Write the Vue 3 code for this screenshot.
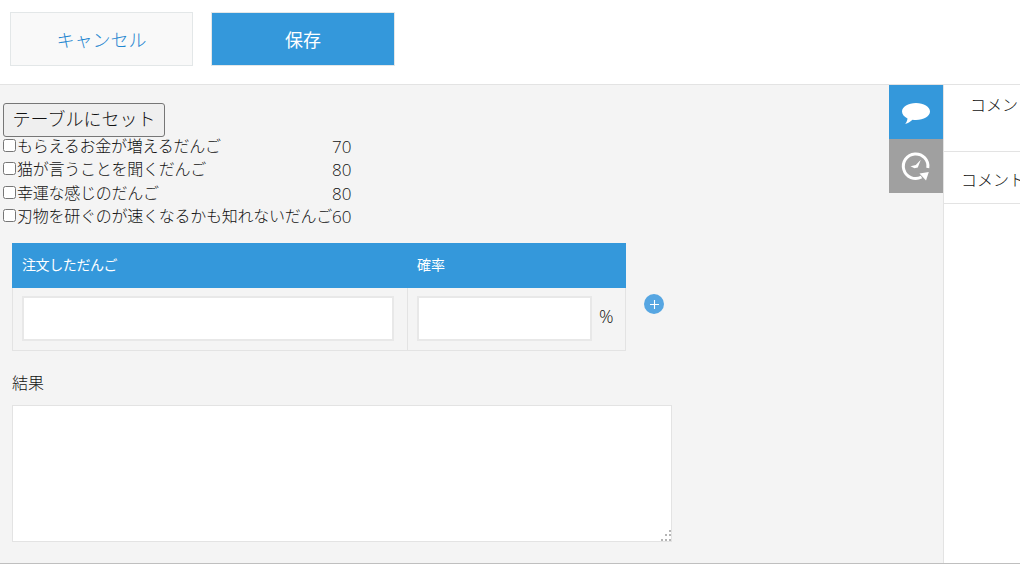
<script setup>
const dangos = [
  { name: "もらえるお金が増えるだんご", rate: 70 },
  { name: "猫が言うことを聞くだんご", rate: 80 },
  { name: "幸運な感じのだんご", rate: 80 },
  { name: "刃物を研ぐのが速くなるかも知れないだんご", rate: 60 },
];
</script>

<template>
  <div class="page">
    <header class="toolbar">
      <button class="btn btn--cancel" type="button">キャンセル</button>
      <button class="btn btn--save" type="button">保存</button>
    </header>

    <div class="content">
      <main class="form">
        <button class="set-btn" type="button">テーブルにセット</button>
        <table class="dango-list">
          <tbody>
            <tr v-for="dango in dangos" :key="dango.name">
              <td class="dango-list__name">
                <input class="dango-list__check" type="checkbox" />{{ dango.name }}
              </td>
              <td class="dango-list__rate">{{ dango.rate }}</td>
            </tr>
          </tbody>
        </table>

        <div class="order">
          <div class="order-table">
            <div class="order-table__head">
              <div class="order-table__name">注文しただんご</div>
              <div class="order-table__rate">確率</div>
            </div>
            <div class="order-table__row">
              <div class="order-table__cell order-table__cell--name">
                <input class="field field--name" type="text" />
              </div>
              <div class="order-table__cell order-table__cell--rate">
                <input class="field field--rate" type="text" />
                <span class="unit">%</span>
              </div>
            </div>
          </div>
          <button class="add-btn" type="button" aria-label="行を追加">
            <svg width="9" height="9" viewBox="0 0 9 9">
              <path d="M4.5 0v9M0 4.5h9" stroke="#fff" stroke-width="1.1" fill="none" />
            </svg>
          </button>
        </div>

        <label class="result-label">結果</label>
        <div class="result-wrap">
          <textarea class="result"></textarea>
          <svg class="grip" width="12" height="12" viewBox="0 0 12 12">
            <path
              d="M9 0h2v2H9zM5 4h2v2H5zM9 4h2v2H9zM1 9h2v2H1zM5 9h2v2H5zM9 9h2v2H9z"
              fill="#b5b5b5"
            />
          </svg>
        </div>
      </main>

      <aside class="side">
        <div class="side__tabs">
          <div class="tab tab--comment">
            <svg width="30" height="24" viewBox="0 0 30 24">
              <path
                d="M15 3C22.800 3 29 6.800 29 11.500C29 16.300 22.800 20 15 20C13.800 20 12.600 19.900 11.500 19.700C9.500 21.600 7.300 23 4.200 24C5.400 22.300 6.300 20.500 6.500 18.400C3.200 16.900 1 14.400 1 11.500C1 6.800 7.200 3 15 3Z"
                fill="#fff"
              />
            </svg>
          </div>
          <div class="tab tab--history">
            <svg width="32" height="32" viewBox="0 0 32 32">
              <path
                d="M27.800 18A12.300 12.300 0 1 0 21.500 27"
                stroke="#fff"
                stroke-width="3"
                fill="none"
              />
              <path d="M19.500 23.500L28.800 22L26 30.500Z" fill="#fff" />
              <path d="M10.500 16.300L15.800 15L20.800 9.800L17.800 17.500L14.500 18.200Z" fill="#fff" />
            </svg>
          </div>
        </div>
        <div class="side__title">コメント</div>
        <div class="side__sub">コメント</div>
      </aside>
    </div>
  </div>
</template>

<style>
html,
body {
  margin: 0;
  overflow: hidden;
}
</style>

<style scoped>
.page {
  width: 1020px;
  height: 564px;
  display: flex;
  flex-direction: column;
  overflow: hidden;
  background: #fff;
  font-family: "Open Sans", "Noto Sans CJK JP", sans-serif;
  font-weight: 300;
  color: #111;
}

.toolbar {
  display: flex;
  gap: 18px;
  height: 85px;
  flex-shrink: 0;
  box-sizing: border-box;
  padding: 12px 10px 0;
  border-bottom: 1px solid #e3e3e3;
}

.btn {
  width: 184px;
  height: 54px;
  box-sizing: border-box;
  font-family: inherit;
  font-weight: 300;
  font-size: 18px;
  padding: 0;
}

.btn--cancel {
  width: 183px;
  background: #f9f9f9;
  border: 1px solid #e3e7e8;
  color: #1f86d0;
}

.btn--save {
  background: #3498db;
  border: 1px solid #e3e7e8;
  color: #fff;
  font-weight: 400;
}

.content {
  flex: 1;
  display: flex;
  min-height: 0;
  border-bottom: 1px solid #bfbfbf;
}

.form {
  width: 943px;
  flex-shrink: 0;
  box-sizing: border-box;
  background: #f4f4f4;
  padding-top: 18px;
}

.set-btn {
  display: block;
  margin-left: 3px;
  width: 162px;
  height: 34px;
  padding: 0 0 4px;
  box-sizing: border-box;
  background: #efefef;
  border: 1px solid #767676;
  border-radius: 3px;
  font-family: inherit;
  font-weight: 300;
  font-size: 18px;
  color: #111;
  white-space: nowrap;
}

.dango-list {
  border-collapse: collapse;
  margin: -2px 0 0 3px;
  font-size: 16px;
  line-height: 23.3px;
}

.dango-list td {
  padding: 0;
}

.dango-list__name {
  white-space: nowrap;
  letter-spacing: -0.25px;
}

.dango-list__rate {
  font-size: 17px;
}

.dango-list__check {
  width: 13px;
  height: 13px;
  margin: 0 1px 0 0;
  vertical-align: 0;
}

.order {
  display: flex;
  align-items: flex-start;
  margin: 15px 0 0 12px;
}

.order-table {
  width: 614px;
}

.order-table__head {
  display: flex;
  align-items: center;
  height: 45px;
  padding-bottom: 4px;
  box-sizing: border-box;
  background: #3498db;
  color: #fff;
  font-size: 14px;
  font-weight: 400;
}

.order-table__name {
  width: 396px;
  padding-left: 10px;
  box-sizing: border-box;
  letter-spacing: -0.4px;
}

.order-table__rate {
  padding-left: 9px;
}

.order-table__row {
  display: flex;
  height: 63px;
  box-sizing: border-box;
  border: 1px solid #e3e3e3;
  border-top: 0;
}

.order-table__cell {
  display: flex;
  padding: 8px 0 0 9px;
  box-sizing: border-box;
}

.order-table__cell--name {
  width: 395px;
  padding-left: 9px;
  border-right: 1px solid #e3e3e3;
}

.order-table__cell--rate {
  flex: 1;
}

.field {
  height: 45px;
  box-sizing: border-box;
  background: #fff;
  border: 2px solid #e8e8e8;
  padding: 0;
}

.field--name {
  width: 372px;
}

.field--rate {
  width: 175px;
}

.unit {
  margin: 9px 0 0 7px;
  font-size: 18px;
  line-height: 22px;
}

.add-btn {
  display: flex;
  align-items: center;
  justify-content: center;
  width: 20px;
  height: 20px;
  margin: 51px 0 0 18px;
  padding: 0;
  border: 0;
  border-radius: 50%;
  background: #56a6e2;
}

.result-label {
  display: block;
  margin: 20px 0 0 12px;
  font-size: 16px;
  line-height: 24px;
}

.result-wrap {
  position: relative;
  width: 660px;
  height: 137px;
  margin: 10px 0 0 12px;
}

.result {
  display: block;
  width: 100%;
  height: 100%;
  box-sizing: border-box;
  background: #fff;
  border: 1px solid #e3e3e3;
  padding: 0;
  resize: none;
}

.grip {
  position: absolute;
  right: 0;
  bottom: 0;
}

.side {
  position: relative;
  flex: 1;
  min-width: 0;
  box-sizing: border-box;
  background: #fff;
  border-left: 1px solid #e3e3e3;
  white-space: nowrap;
  overflow: visible;
}

.side__tabs {
  position: absolute;
  top: 0;
  left: -55px;
  width: 54px;
}

.tab {
  display: flex;
  align-items: center;
  justify-content: center;
  height: 54px;
}

.tab--comment {
  background: #3498db;
}

.tab--history {
  background: #a0a0a0;
}

.side__title {
  height: 67px;
  padding: 8px 0 0 26px;
  box-sizing: border-box;
  border-bottom: 1px solid #e3e3e3;
  font-size: 16px;
  line-height: 24px;
}

.side__sub {
  height: 52px;
  padding: 16px 0 0 17px;
  box-sizing: border-box;
  border-bottom: 1px solid #e3e3e3;
  font-size: 16px;
  line-height: 24px;
}
</style>
